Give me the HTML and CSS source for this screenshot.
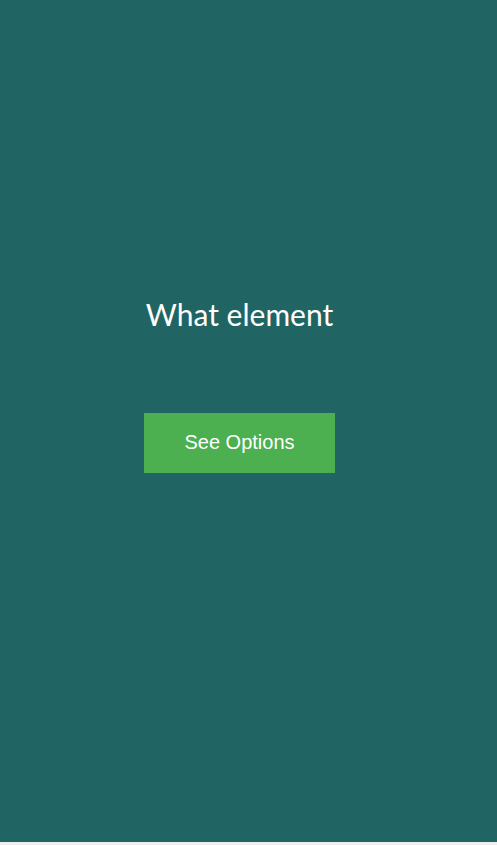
FILE: index.html
```html
<!DOCTYPE html>
<html>
<head>
<meta charset="utf-8">
<link rel="stylesheet" href="styles.css">
</head>
<body>
<main class="screen">
  <h1 class="title">What element</h1>
  <button class="options-btn">See Options</button>
</main>
</body>
</html>
```
FILE: styles.css
```css
html, body {
  margin: 0;
  padding: 0;
  background: #eef0f0;
}
.screen {
  height: 842px;
  background: #206563;
  display: flex;
  flex-direction: column;
  align-items: center;
  padding: 296px 18px 0 0;
  box-sizing: border-box;
}
.title {
  margin: 0;
  font-family: Lato, "Open Sans", sans-serif;
  font-weight: 400;
  font-size: 30px;
  line-height: 36px;
  color: #ffffff;
}
.options-btn {
  margin-top: 81px;
  width: 191px;
  height: 60px;
  border: none;
  background: #4caf50;
  color: #ffffff;
  font-family: "Liberation Sans", Arial, sans-serif;
  font-size: 20px;
  padding: 0 0 2px;
}
```
